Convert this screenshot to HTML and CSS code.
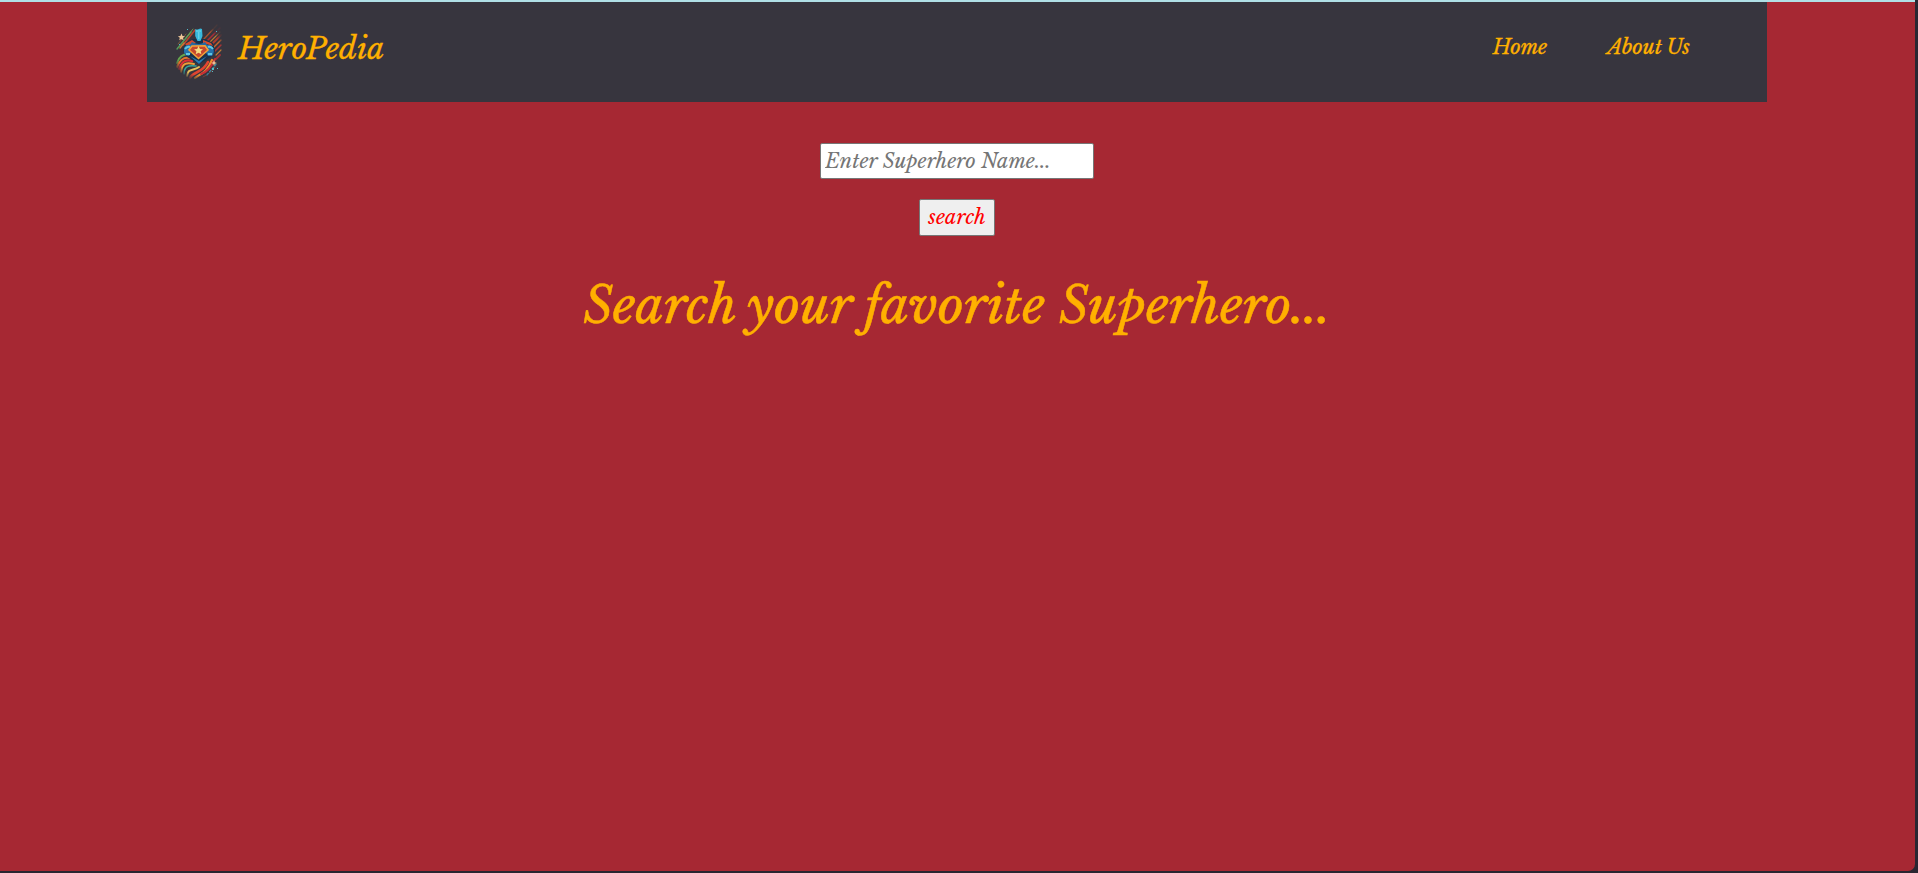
FILE: index.html
```html
<!DOCTYPE html>
<html lang="en">
<head>
<meta charset="utf-8">
<title>HeroPedia</title>
<link rel="stylesheet" href="styles.css">
</head>
<body>
<div class="page">
  <header class="navbar">
    <div class="brand">
      <svg class="logo" viewBox="0 0 60 64" aria-hidden="true">
        <defs>
          <radialGradient id="fade" gradientUnits="userSpaceOnUse" cx="0" cy="0" r="1" gradientTransform="translate(29 32) scale(27 28)">
            <stop offset=".82" stop-color="#fff"/>
            <stop offset="1" stop-color="#fff" stop-opacity=".15"/>
          </radialGradient>
          <mask id="edge" maskUnits="userSpaceOnUse" x="0" y="0" width="60" height="64"><path d="M0 0h60v64H0z" fill="url(#fade)"/></mask>
        </defs>
        <g fill="none" stroke-linecap="round" mask="url(#edge)">
          <path d="M7 29 21 12" stroke="#569b58" stroke-width="1.5"/>
          <path d="M8 24 16 14" stroke="#7d5a3c" stroke-width="1"/>
          <path d="M13 25 25 10" stroke="#b8452f" stroke-width="1.6"/>
          <path d="M16 18 23 9" stroke="#6d9a50" stroke-width="1"/>
          <path d="M10 28 14 23" stroke="#c97a34" stroke-width="1.5"/>
          <path d="M34 19 47 5" stroke="#a8522c" stroke-width="1.3"/>
          <path d="M36 22 50 8" stroke="#a82f36" stroke-width="1.6"/>
          <path d="M39 23 50 12" stroke="#bd7a35" stroke-width="1.1"/>
          <path d="M42 24 51 15" stroke="#b13a2e" stroke-width="1.8"/>
          <path d="M44 27 51 20" stroke="#c9642d" stroke-width="1.5"/>
          <path d="M45 31 51 25" stroke="#ae3535" stroke-width="1.6"/>
          <path d="M46 35 51 30" stroke="#bd7a35" stroke-width="1.2"/>
          <path d="M46 39 50 35" stroke="#9f3137" stroke-width="2"/>
          <path d="M7 43c2-7 6-9 12-9" stroke="#65a64d" stroke-width="2"/>
          <path d="M7 47c3-8 7-10 13-9" stroke="#e7742c" stroke-width="2.2"/>
          <path d="M9 49c3-8 7-10 13-8" stroke="#dd2f34" stroke-width="2.4"/>
          <path d="M11 52c1-9 6-10 13-8" stroke="#f09c36" stroke-width="2"/>
          <path d="M14 54c0-8 5-9 12-8" stroke="#35a69c" stroke-width="1.6"/>
          <path d="M17 56c1-8 6-5 12-9" stroke="#e7c15b" stroke-width="2"/>
          <path d="M20 58c3-7 12-4 18-16" stroke="#e34530" stroke-width="2.6"/>
          <path d="M25 58c5-4 12-5 17-18" stroke="#ef8d2d" stroke-width="2.2"/>
          <path d="M31 54c6-2 10-6 14-15" stroke="#c72e35" stroke-width="2"/>
          <path d="M33 57c5-2 9-6 12-10" stroke="#8f473a" stroke-width="1"/>
          <path d="M37 55 47 43" stroke="#318dab" stroke-width="1.2" stroke-dasharray="2 2"/>
        </g>
        <path d="M16 23 23 19h12l8 4 2 8-4 6-12 7-12-7-4-6z" fill="#19304a"/>
        <path d="m15 24 7-4 4 3-9 3zM33 20l8 3 2 3-10-3z" fill="#d74a2c"/>
        <path d="M22 22q7 4 13 0l3 4H19z" fill="#2768a0"/>
        <path d="M25.200 9q1.800 1 3.600 0t3.200 0l.5 7-2 5h-3l-2.300-5z" fill="#38b8dc"/>
        <path d="M26 11h5M28.800 12v7" stroke="#83e4ed" stroke-width=".8"/>
        <path d="M14 28q2-4 7-3l2 4-4 7q-6 0-5-8zM36 25q5-1 7 3t-1 8h-4l-4-7z" fill="#2673ad"/>
        <path d="M15 29q2-3 5-2M38 27q3-1 5 2M16 34h4M38 34h4" stroke="#60c9e2" fill="none" stroke-width="2"/>
        <path d="m22 26 13-.2 3 4.200-9.500 8.500L19 30z" fill="#c5472e" stroke="#f2a238" stroke-width="1.600"/>
        <path d="m28.500 26 1.500 3 3 .3-2.300 2 .7 3-2.900-1.500-2.800 1.500.7-3-2.300-2 3-.3z" fill="#f5dc80"/>
        <path d="m20 36 9 5 8-5-8 8z" fill="#277bb5"/>
        <path d="m11.500 13.500 1 2.400 2.500.3-2 1.500.6 2.600-2.200-1.400-2.200 1.400.6-2.600-1.900-1.500 2.500-.3zM44 40l.8 2.200L47 43l-2.200.8L44 46l-.8-2.200L41 43l2.200-.8z" fill="#efc797"/>
        <path d="M17 9h1v1h-1zM46 11h1v1h-1zM9 24h1v1H9zM47 48h1v1h-1zM42 51h1v1h-1zM42 48h2v2h-2z" fill="#55bac6"/>
      </svg>
      <span class="brand-name">HeroPedia</span>
    </div>
    <nav class="links"><a>Home</a><a>About Us</a></nav>
  </header>
  <main class="content">
    <input class="search-input" type="text" placeholder="Enter Superhero Name...">
    <button class="search-button">search</button>
    <h1 class="message">Search your favorite Superhero...</h1>
  </main>
</div>
</body>
</html>
```
FILE: styles.css
```css
* { box-sizing: border-box; }
body {
  margin: 0;
  height: 873px;
  overflow: hidden;
  background: #292631;
  font-family: "Libre Baskerville", "Liberation Serif", serif;
  font-style: italic;
}
.page {
  width: 1915px;
  height: 871px;
  border-top: 2px solid #b0e0e6;
  border-bottom-right-radius: 7px;
  background: #a62833;
}
.navbar {
  display: flex;
  justify-content: space-between;
  width: 1620px;
  height: 100px;
  margin-left: 147px;
  padding: 18px 77px 0 23px;
  background: #37353e;
  color: #ffb000;
  -webkit-text-stroke: 0.3px;
}
.brand { display: flex; }
.logo { width: 60px; height: 64px; }
.brand-name {
  margin: 9px 0 0 8px;
  font-size: 30px;
  line-height: 40px;
}
.links {
  display: flex;
  gap: 60px;
  padding-top: 13px;
  font-size: 20px;
  line-height: 28px;
}
.content {
  display: flex;
  flex-direction: column;
  align-items: center;
  padding: 41px 1px 0 0;
}
.search-input {
  width: 274px;
  height: 36px;
  padding: 1px 4px;
  border: 1px solid #767676;
  border-radius: 2px;
  background: #fff;
  font: inherit;
  font-size: 20px;
}
.search-input::placeholder { color: #757575; }
.search-button {
  width: 76px;
  height: 37px;
  margin-top: 20px;
  padding: 0 0 1px;
  border: 1px solid #767676;
  border-radius: 2px;
  background: #efefef;
  color: #f00;
  font: inherit;
  font-size: 20px;
}
.message {
  margin: 35px 0 0;
  color: #ffb000;
  font-size: 50px;
  font-weight: 400;
  line-height: 70px;
  white-space: nowrap;
  -webkit-text-stroke: 0.5px;
}
```
